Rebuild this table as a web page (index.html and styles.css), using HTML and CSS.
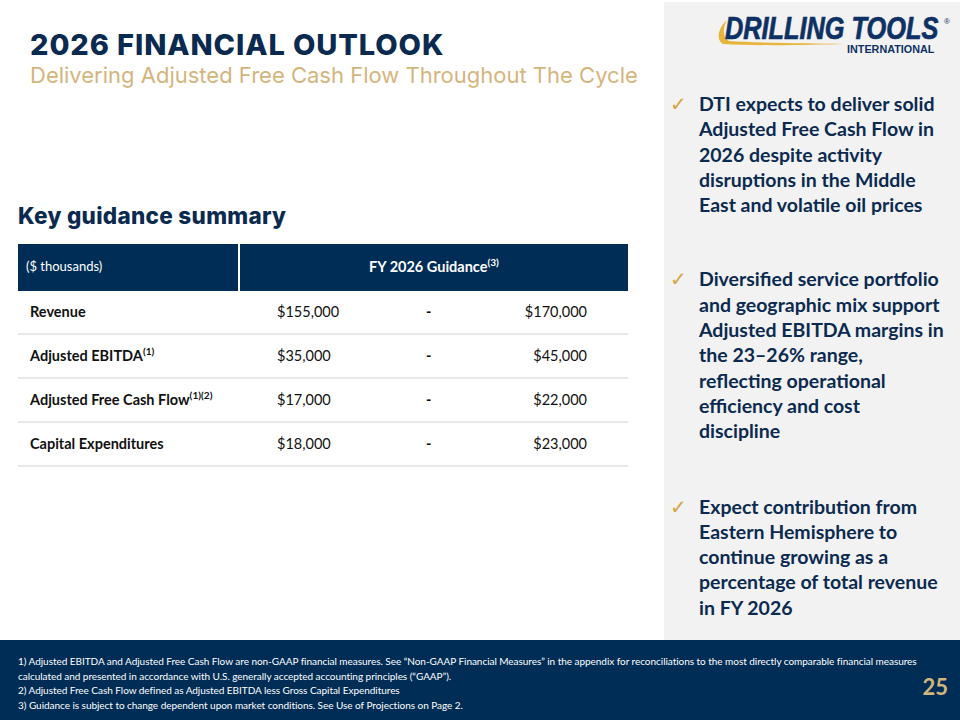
FILE: index.html
```html
<!DOCTYPE html>
<html>
<head>
<meta charset="utf-8">
<link rel="stylesheet" href="styles.css">
</head>
<body>
<div class="slide">
  <div class="main">
    <div class="left">
      <h1 class="title">2026 FINANCIAL OUTLOOK</h1>
      <div class="subtitle">Delivering Adjusted Free Cash Flow Throughout The Cycle</div>
      <h2 class="section">Key guidance summary</h2>
      <div class="table">
        <div class="thead">
          <div class="th-label">($ thousands)</div>
          <div class="th-guid"><span>FY 2026 Guidance<sup>(3)</sup></span></div>
        </div>
        <div class="row">
          <div class="lbl">Revenue</div>
          <div class="v1">$155,000</div>
          <div class="dash">-</div>
          <div class="v2">$170,000</div>
        </div>
        <div class="row">
          <div class="lbl">Adjusted EBITDA<sup>(1)</sup></div>
          <div class="v1">$35,000</div>
          <div class="dash">-</div>
          <div class="v2">$45,000</div>
        </div>
        <div class="row">
          <div class="lbl">Adjusted Free Cash Flow<sup>(1)(2)</sup></div>
          <div class="v1">$17,000</div>
          <div class="dash">-</div>
          <div class="v2">$22,000</div>
        </div>
        <div class="row">
          <div class="lbl">Capital Expenditures</div>
          <div class="v1">$18,000</div>
          <div class="dash">-</div>
          <div class="v2">$23,000</div>
        </div>
      </div>
    </div>
    <div class="right">
      <div class="logo">
        <svg width="240" height="46" viewBox="0 0 240 46">
          <path d="M11 9 C3 16 -1 28 7 33 C40 35 95 34 128 33 C95 32 40 32 13 30 C7 27 6 18 11 9 Z" fill="#e8b53c"/>
          <text x="0" y="0" class="logo-main" transform="translate(9 28) scale(0.817 1)">DRILLING TOOLS</text>
          <text x="228" y="13" class="logo-reg">®</text>
          <text x="131" y="42" class="logo-sub">INTERNATIONAL</text>
        </svg>
      </div>
      <ul class="bullets">
        <li class="b1"><span class="chk">✓</span><span>DTI expects to deliver solid<br>Adjusted Free Cash Flow in<br>2026 despite activity<br>disruptions in the Middle<br>East and volatile oil prices</span></li>
        <li class="b2"><span class="chk">✓</span><span>Diversified service portfolio<br>and geographic mix support<br>Adjusted EBITDA margins in<br>the 23–26% range,<br>reflecting operational<br>efficiency and cost<br>discipline</span></li>
        <li class="b3"><span class="chk">✓</span><span>Expect contribution from<br>Eastern Hemisphere to<br>continue growing as a<br>percentage of total revenue<br>in FY 2026</span></li>
      </ul>
    </div>
  </div>
  <div class="footer">
    <div class="notes">
      <p>1) Adjusted EBITDA and Adjusted Free Cash Flow are non-GAAP financial measures. See “Non-GAAP Financial Measures” in the appendix for reconciliations to the most directly comparable financial measures<br>calculated and presented in accordance with U.S. generally accepted accounting principles (“GAAP”).</p>
      <p>2) Adjusted Free Cash Flow defined as Adjusted EBITDA less Gross Capital Expenditures</p>
      <p>3) Guidance is subject to change dependent upon market conditions. See Use of Projections on Page 2.</p>
    </div>
    <div class="page">25</div>
  </div>
</div>
</body>
</html>
```

FILE: styles.css
```css
html, body {
  margin: 0;
  padding: 0;
  background: #ffffff;
}
.slide {
  width: 960px;
  height: 720px;
  display: flex;
  flex-direction: column;
  overflow: hidden;
  font-family: "Lato", "Open Sans", sans-serif;
}
.main {
  height: 640px;
  display: flex;
}
.left {
  width: 664px;
  box-sizing: border-box;
  padding: 0 0 0 18px;
}
.title {
  margin: 26px 0 0 12px;
  font-family: "Inter", "Lato", sans-serif;
  font-weight: 800;
  font-size: 29px;
  line-height: 38px;
  color: #0b2a50;
  letter-spacing: 0.9px;
}
.subtitle {
  margin: -3px 0 0 12px;
  font-family: "Inter", "Lato", sans-serif;
  font-weight: 400;
  font-size: 22px;
  line-height: 28px;
  color: #d4b57c;
  letter-spacing: 0;
}
.section {
  margin: 113px 0 0 0;
  font-family: "Inter", "Lato", sans-serif;
  font-weight: 800;
  font-size: 22.5px;
  line-height: 28px;
  color: #0b2a50;
  letter-spacing: 0.3px;
}
.table {
  margin-top: 14px;
  width: 610px;
}
.thead {
  height: 47px;
  display: flex;
  background: #002d55;
  color: #ffffff;
}
.th-label {
  width: 222px;
  box-sizing: border-box;
  padding: 0 0 3px 8px;
  font-size: 13px;
  display: flex;
  align-items: center;
  border-right: 2px solid #ffffff;
}
.th-guid {
  flex: 1;
  display: flex;
  align-items: center;
  justify-content: center;
  font-weight: 700;
  font-size: 14.5px;
  padding-bottom: 3px;
}
sup {
  font-size: 0.7em;
  line-height: 0;
  vertical-align: 0.55em;
}
.row {
  height: 44px;
  display: flex;
  align-items: center;
  border-bottom: 2px solid #e8e8e8;
  box-sizing: border-box;
  font-size: 14.5px;
  color: #111111;
  padding-bottom: 2px;
}
.lbl {
  width: 259px;
  padding-left: 12px;
  box-sizing: border-box;
  font-weight: 700;
}
.v1 {
  width: 149px;
}
.dash {
  width: 40px;
  font-weight: 700;
}
.v2 {
  width: 121px;
  text-align: right;
}
.right {
  width: 296px;
  background: #f2f2f2;
  margin-top: 2px;
  box-sizing: border-box;
}
.logo {
  height: 48px;
  padding: 9px 0 0 52px;
  box-sizing: border-box;
}
.logo svg {
  display: block;
}
.logo-main {
  font-family: "Liberation Sans", sans-serif;
  font-weight: 700;
  font-style: italic;
  font-size: 31px;
  fill: #0d3164;
  stroke: #0d3164;
  stroke-width: 0.7px;
}
.logo-reg {
  font-family: "Liberation Sans", sans-serif;
  font-size: 8px;
  fill: #0d3164;
}
.logo-sub {
  font-family: "Liberation Sans", sans-serif;
  font-weight: 700;
  font-size: 10.8px;
  fill: #0d3164;
}
.bullets {
  list-style: none;
  margin: 41px 0 0 0;
  padding: 0;
}
.bullets li {
  display: flex;
  font-weight: 700;
  font-size: 19.5px;
  line-height: 25.3px;
  color: #0b2a50;
}
.chk {
  width: 35px;
  padding-left: 6px;
  color: #d8a545;
  font-weight: 400;
  font-size: 20px;
  flex: none;
  box-sizing: border-box;
}
.b2 {
  margin-top: 49px;
}
.b3 {
  margin-top: 50px;
}
.footer {
  height: 80px;
  background: #002d55;
  display: flex;
  align-items: flex-start;
  box-sizing: border-box;
  padding: 14px 12px 0 18px;
}
.notes {
  flex: 1;
  color: #ffffff;
  font-size: 10px;
  line-height: 14.5px;
  letter-spacing: -0.04px;
  white-space: nowrap;
}
.notes p {
  margin: 0;
}
.page {
  width: 40px;
  text-align: right;
  margin-top: 19px;
  color: #d4b57c;
  font-weight: 700;
  font-size: 22px;
}
```
